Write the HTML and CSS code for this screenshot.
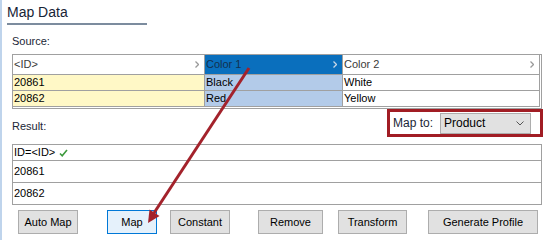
FILE: index.html
```html
<html>
<head>
  <link rel="stylesheet" href="styles.css">
</head>
<body>
  <div class="window">
    <h1 class="title">Map Data</h1>
    <div class="label source-label">Source:</div>

    <div class="frame source">
      <div class="source-grid">
        <div class="cell head"><span>&lt;ID&gt;</span><svg class="chev" width="4" height="7" viewBox="0 0 4 7"><polyline points="0.5,0.5 3.5,3.5 0.5,6.5"/></svg></div>
        <div class="cell head picked"><span>Color 1</span><svg class="chev" width="4" height="7" viewBox="0 0 4 7"><polyline points="0.5,0.5 3.5,3.5 0.5,6.5"/></svg></div>
        <div class="cell head last"><span>Color 2</span><svg class="chev" width="4" height="7" viewBox="0 0 4 7"><polyline points="0.5,0.5 3.5,3.5 0.5,6.5"/></svg></div>

        <div class="cell key">20861</div>
        <div class="cell sel">Black</div>
        <div class="cell last">White</div>

        <div class="cell key">20862</div>
        <div class="cell sel">Red</div>
        <div class="cell last">Yellow</div>
      </div>
    </div>

    <div class="result-bar">
      <div class="label">Result:</div>
      <div class="map-to">
        <span class="map-to-label">Map to:</span>
        <div class="select">
          <span>Product</span>
          <svg class="drop" width="8" height="5" viewBox="0 0 8 5"><polyline points="0.5,0.5 4,4 7.5,0.5"/></svg>
        </div>
      </div>
    </div>

    <div class="frame result">
      <div class="row first">ID=&lt;ID&gt; <svg class="check" width="9" height="8" viewBox="0 0 9 8"><polyline points="1,4.5 3.2,6.8 8,1"/></svg></div>
      <div class="row">20861</div>
      <div class="row">20862</div>
    </div>

    <div class="buttons">
      <button class="btn auto">Auto Map</button>
      <button class="btn map active">Map</button>
      <button class="btn constant">Constant</button>
      <button class="btn remove">Remove</button>
      <button class="btn transform">Transform</button>
      <button class="btn profile">Generate Profile</button>
    </div>

    <!-- annotation arrow drawn over the dialog -->
    <svg class="arrow" width="545" height="240" viewBox="0 0 545 240">
      <line x1="249" y1="68" x2="154" y2="213"/>
      <polygon points="148,223 159.5,216 149.5,209.5"/>
    </svg>
  </div>
</body>
</html>
```

FILE: styles.css
```css
body {
  margin: 0;
  background: #fff;
  font: 11px/13px "Liberation Sans", Arial, sans-serif;
  color: #000;
}
.window {
  position: relative;
  width: 530px;
  height: 240px;
  padding-left: 10px;
  border-left: 2px solid #bfd4ec;
}
.title {
  width: 140px;
  margin: 0 0 0 -5px;
  padding: 4px 0 2px;
  font-size: 14px;
  font-weight: normal;
  line-height: 17px;
  color: #172436;
  border-bottom: 2px solid #7c8c9e;
}
.label {
  color: #1a2636;
}
.source-label {
  margin-top: 10px;
}
.frame {
  border: 1px solid #a0a0a0;
}
.source {
  margin-top: 6px;
  padding: 0 1px 1px 0;
}
.source-grid {
  display: grid;
  grid-template-columns: 192px 138px 197px;
  grid-template-rows: 20px 16px 16px;
}
.cell {
  display: flex;
  align-items: center;
  padding-left: 1px;
  border-right: 1px solid #a0a0a0;
  border-bottom: 1px solid #a0a0a0;
  white-space: nowrap;
}
.cell.head {
  justify-content: space-between;
  padding-right: 5px;
  color: #3a3a3a;
  background: #fff;
}
.cell.head.picked {
  background: #0a6fbd;
  color: #13314f;
}
.cell.key {
  background: #fff8c6;
}
.cell.sel {
  background: #b3cbe9;
}
.chev polyline {
  fill: none;
  stroke: #9a9a9a;
  stroke-width: 1.3;
}
.picked .chev polyline {
  stroke: #c7d6e6;
}
.result-bar {
  display: flex;
  justify-content: space-between;
  align-items: flex-end;
}
.result-bar .label {
  margin-bottom: 4px;
}
.map-to {
  display: flex;
  align-items: center;
  width: 144px;
  height: 22px;
  padding: 0 3px 0 3px;
  border: 3px solid #a11d24;
  margin-right: -1px;
  color: #1a2636;
  font-size: 12px;
}
.map-to-label {
  width: 47px;
}
.select {
  display: flex;
  align-items: center;
  justify-content: space-between;
  box-sizing: border-box;
  width: 91px;
  height: 21px;
  padding: 0 6px 0 3px;
  background: #e1e1e1;
  border: 1px solid #adadad;
  color: #000;
}
.drop polyline {
  fill: none;
  stroke: #555;
  stroke-width: 1;
}
.result {
  margin-top: 7px;
}
.row {
  display: flex;
  align-items: center;
  height: 21px;
  padding-left: 1px;
  border-bottom: 1px solid #a0a0a0;
}
.row.first {
  height: 15px;
}
.row:last-child {
  border-bottom: none;
}
.check {
  margin-left: 4px;
}
.check polyline {
  fill: none;
  stroke: #3d9a3d;
  stroke-width: 1.6;
}
.buttons {
  display: flex;
  margin-top: 5px;
}
.btn {
  box-sizing: border-box;
  height: 24px;
  padding: 0;
  font: inherit;
  color: #000;
  background: #e1e1e1;
  border: 1px solid #adadad;
}
.btn.active {
  background: #e5f1fb;
  border-color: #0078d7;
}
.auto { width: 60px; margin-left: 6px; }
.map { width: 50px; margin-left: 29px; }
.constant { width: 60px; margin-left: 13px; }
.remove { width: 65px; margin-left: 28px; }
.transform { width: 69px; margin-left: 15px; }
.profile { width: 110px; margin-left: 21px; }
.arrow {
  position: absolute;
  top: 0;
  left: -2px;
  pointer-events: none;
}
.arrow line {
  stroke: #a3222b;
  stroke-width: 3;
}
.arrow polygon {
  fill: #a3222b;
}
```
